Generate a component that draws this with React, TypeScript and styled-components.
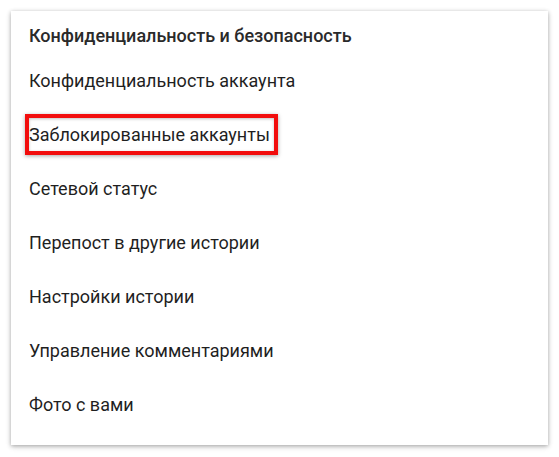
import React from "react";
import styled, { createGlobalStyle } from "styled-components";

const Global = createGlobalStyle`
  html, body {
    margin: 0;
    padding: 0;
    background: #ffffff;
  }
  body {
    font-family: Roboto, "Noto Sans", "Liberation Sans", sans-serif;
    color: #212121;
  }
`;

const Page = styled.div`
  padding: 11px;
  width: 559px;
  height: 457px;
  box-sizing: border-box;
`;

const Card = styled.div`
  width: 537px;
  height: 434px;
  box-sizing: border-box;
  background: #ffffff;
  box-shadow: 0 1px 4px rgba(0, 0, 0, 0.28), 0 2px 6px rgba(0, 0, 0, 0.12);
  padding: 5px 18px 13px 18px;
  display: flex;
  flex-direction: column;
`;

const Header = styled.div`
  height: 38px;
  display: flex;
  align-items: center;
  font-size: 18px;
  font-weight: 500;
  color: #2a2a2a;
`;

const Row = styled.div`
  height: 54px;
  display: flex;
  align-items: center;
  font-size: 18px;
  font-weight: 400;
  color: #1f1f1f;
`;

const Label = styled.span<{ $marked?: boolean }>`
  position: relative;
  line-height: 1;

  ${(p) =>
    p.$marked &&
    `
    &::after {
      content: "";
      position: absolute;
      left: -4px;
      right: -8px;
      top: -12px;
      bottom: -11px;
      border: 4px solid #f20d0d;
      box-shadow: 0 1px 4px rgba(0, 0, 0, 0.35), inset 0 1px 3px rgba(0, 0, 0, 0.25);
    }
  `}
`;

const items = [
  "Конфиденциальность аккаунта",
  "Заблокированные аккаунты",
  "Сетевой статус",
  "Перепост в другие истории",
  "Настройки истории",
  "Управление комментариями",
  "Фото с вами",
];

export default function App() {
  return (
    <>
      <Global />
      <Page>
        <Card>
          <Header>Конфиденциальность и безопасность</Header>
          {items.map((t, i) => (
            <Row key={t}>
              <Label $marked={i === 1}>{t}</Label>
            </Row>
          ))}
        </Card>
      </Page>
    </>
  );
}
